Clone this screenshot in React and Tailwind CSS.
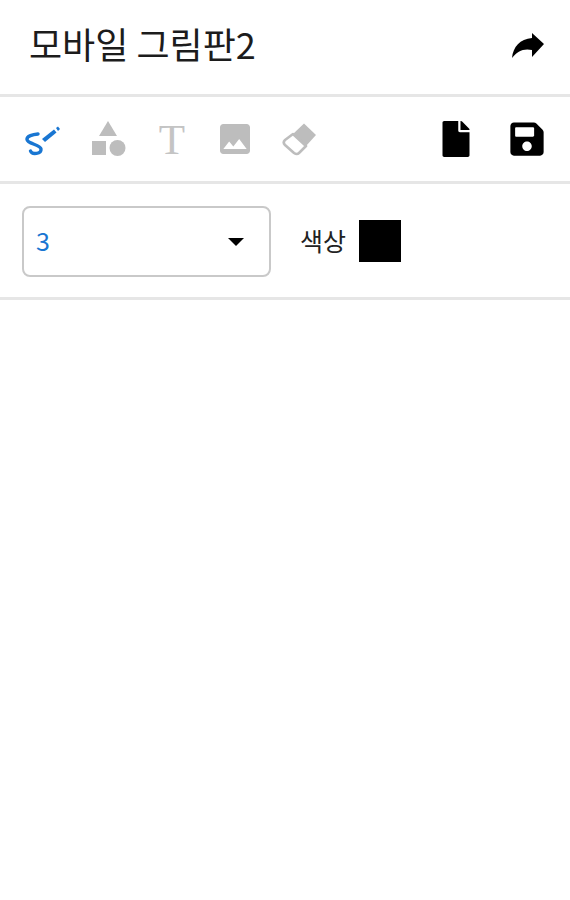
import React from "react";
import { FaFile, FaSave } from "react-icons/fa";
import { MdImage } from "react-icons/md";

const font = { fontFamily: '"Noto Sans CJK KR","Noto Sans",sans-serif' };

function Brush() {
  return (
    <svg viewBox="0 0 38 36" className="w-[38px] h-[36px]" fill="none">
      <path d="M15 13 C10 13.500 3.500 15 4 18.500 C4.500 23 17.500 23.500 18 28 C18.500 33 9 34 7.500 30" stroke="#1976d2" strokeWidth="3.4" strokeLinecap="round" />
      <path d="M19 18 L31 8.500 L33.500 11.500 L22 21 Z" fill="#1976d2" />
      <path d="M33 7 L35 5.500 L37 8 L35 10 Z" fill="#1976d2" />
    </svg>
  );
}
function Shapes() {
  return (
    <svg viewBox="0 0 36 36" className="w-[36px] h-[36px]" fill="#bdbdbd">
      <path d="M17 0 L26 15 L8 15 Z" />
      <rect x="1" y="20" width="14" height="14" />
      <circle cx="26.500" cy="27" r="8" />
    </svg>
  );
}
function Eraser() {
  return (
    <svg viewBox="0 0 38 36" className="w-[38px] h-[36px]">
      <path d="M23 2.500 L35 14 L25 25 L12 13 Z" fill="#bdbdbd" />
      <path d="M12 13 L25 25 L18 32 Q16 34 13 32 L4 24 Q1.500 21.500 4 19 Z" fill="#fff" stroke="#bdbdbd" strokeWidth="2.600" strokeLinejoin="round" />
    </svg>
  );
}
function Share() {
  return (
    <svg viewBox="0 0 34 28" className="w-[34px] h-[28px] mt-[4px]" fill="#000">
      <path d="M21 2 L33 13 L21 26 L21 19 C13 17 6 20 1 27 C2 16 9 8 21 7 Z" />
    </svg>
  );
}

export default function App() {
  return (
    <div className="w-[570px] h-[900px] bg-white flex flex-col" style={font}>
      <header className="h-[97px] shrink-0 border-b-[3px] border-[#e6e6e6] flex items-center justify-between pl-[29px] pr-[25px] pb-[8px]">
        <h1 className="text-[36px] leading-none text-[#1c1c1c] font-normal">모바일 그림판2</h1>
        <Share />
      </header>
      <div className="h-[87px] shrink-0 border-b-[3px] border-[#e6e6e6] flex items-center pl-[23px] pr-[24px]">
        <div className="flex items-center">
          <Brush />
          <span className="ml-[30px]"><Shapes /></span>
          <span className="ml-[30px] w-[30px] text-center text-[43px] leading-none text-[#c4c4c4]" style={{ fontFamily: '"Liberation Serif",serif' }}>T</span>
          <MdImage className="ml-[28px] w-[40px] h-[40px] text-[#bdbdbd]" />
          <span className="ml-[26px]"><Eraser /></span>
        </div>
        <div className="ml-auto flex items-center gap-[37px]">
          <FaFile className="w-[30px] h-[36px] text-black" />
          <FaSave className="w-[38px] h-[38px] text-black" />
        </div>
      </div>
      <div className="h-[116px] shrink-0 border-b-[3px] border-[#e6e6e6] flex items-center pl-[22px] pt-[2px]">
        <div className="w-[249px] h-[71px] rounded-[8px] border-2 border-[#c9c9c9] flex items-center justify-between pl-[12px] pr-[25px]">
          <span className="text-[25px] leading-none text-[#1976d2] -mt-[3px]">3</span>
          <span className="w-0 h-0 border-x-[8px] border-x-transparent border-t-[8px] border-t-black" />
        </div>
        <span className="ml-[29px] text-[25px] leading-none text-[#222] -mt-[2px]">색상</span>
        <span className="ml-[13px] w-[42px] h-[42px] bg-black -mt-[2px]" />
      </div>
      <div className="flex-1 bg-white" />
    </div>
  );
}
